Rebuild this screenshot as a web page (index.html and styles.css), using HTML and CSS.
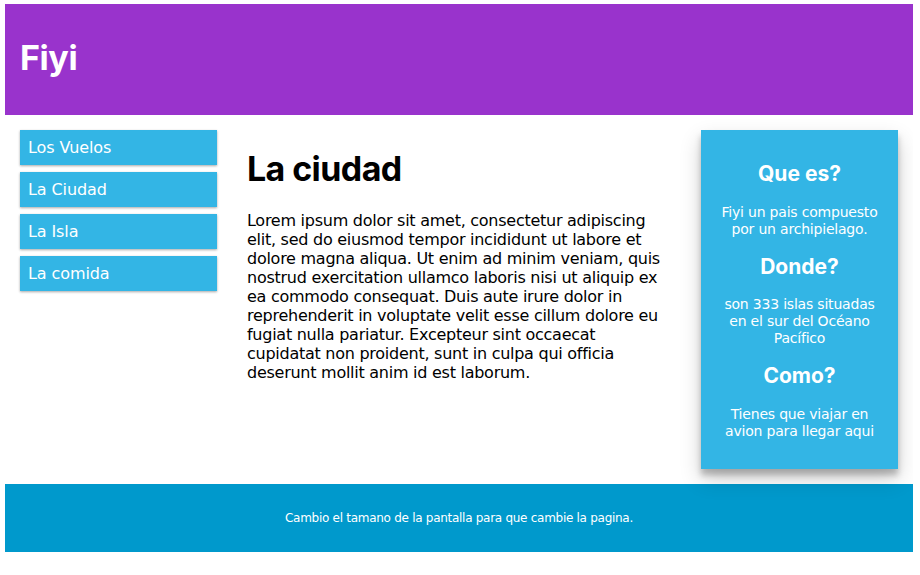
FILE: index.html
```html
<!DOCTYPE html>
<html lang="es">
<head>
<meta charset="utf-8">
<title>Fiyi</title>
<link rel="stylesheet" href="styles.css">
</head>
<body>
<div class="header">
  <h1>Fiyi</h1>
</div>

<div class="row">
  <div class="col col-menu">
    <ul class="menu">
      <li>Los Vuelos</li>
      <li>La Ciudad</li>
      <li>La Isla</li>
      <li>La comida</li>
    </ul>
  </div>

  <div class="col col-main">
    <h1>La ciudad</h1>
    <p>Lorem ipsum dolor sit amet, consectetur adipiscing elit, sed do eiusmod tempor incididunt ut labore et dolore magna aliqua. Ut enim ad minim veniam, quis nostrud exercitation ullamco laboris nisi ut aliquip ex ea commodo consequat. Duis aute irure dolor in reprehenderit in voluptate velit esse cillum dolore eu fugiat nulla pariatur. Excepteur sint occaecat cupidatat non proident, sunt in culpa qui officia deserunt mollit anim id est laborum.</p>
  </div>

  <div class="col col-aside">
    <div class="aside">
      <h2>Que es?</h2>
      <p>Fiyi un pais compuesto por un archipielago.</p>
      <h2>Donde?</h2>
      <p>son 333 islas situadas en el sur del Océano Pacífico</p>
      <h2>Como?</h2>
      <p>Tienes que viajar en avion para llegar aqui</p>
    </div>
  </div>
</div>

<div class="footer">
  <p>Cambio el tamano de la pantalla para que cambie la pagina.</p>
</div>
</body>
</html>
```

FILE: styles.css
```css
* {
  box-sizing: border-box;
}

html {
  font-family: "DejaVu Sans", "Liberation Sans", sans-serif;
}

body {
  margin: 4px 7px 0 5px;
  background: #ffffff;
}

h1,
h2 {
  font-family: Inter, "DejaVu Sans", sans-serif;
  font-weight: 700;
}

.header {
  background-color: #9933cc;
  color: #ffffff;
  padding: 15px;
}

.header h1 {
  font-size: 34px;
  line-height: 38px;
  letter-spacing: -0.4px;
  margin: 20px 0 23px;
}

.row {
  display: grid;
  grid-template-columns: 25% 50% 25%;
  align-items: start;
}

.col {
  padding: 15px;
}

.menu {
  list-style-type: none;
  margin: 0;
  padding: 0;
}

.menu li {
  padding: 8px;
  margin-bottom: 7px;
  background-color: #33b5e5;
  color: #ffffff;
  font-size: 16px;
  letter-spacing: -0.1px;
  box-shadow: 0 1px 3px rgba(0, 0, 0, 0.12), 0 1px 2px rgba(0, 0, 0, 0.24);
}

.col-main h1 {
  font-size: 34px;
  line-height: 38px;
  letter-spacing: -0.6px;
  margin: 20px 0 23px;
}

.col-main p {
  font-size: 16px;
  line-height: 19px;
  letter-spacing: -0.26px;
  margin: 16px 0;
  color: #000;
}

.aside {
  background-color: #33b5e5;
  padding: 15px;
  color: #ffffff;
  text-align: center;
  font-size: 14px;
  box-shadow: 0 10px 20px rgba(0, 0, 0, 0.19), 0 6px 6px rgba(0, 0, 0, 0.23);
}

.aside h2 {
  font-size: 21px;
  line-height: 24.7px;
  margin: 17px 0;
}

.aside p {
  line-height: 17px;
  letter-spacing: -0.2px;
  margin: 14px 0;
}

.footer {
  background-color: #0099cc;
  color: #ffffff;
  text-align: center;
  font-size: 12px;
  letter-spacing: -0.28px;
  padding: 15px;
}

.footer p {
  line-height: 14px;
  margin: 12px 0;
}
```
